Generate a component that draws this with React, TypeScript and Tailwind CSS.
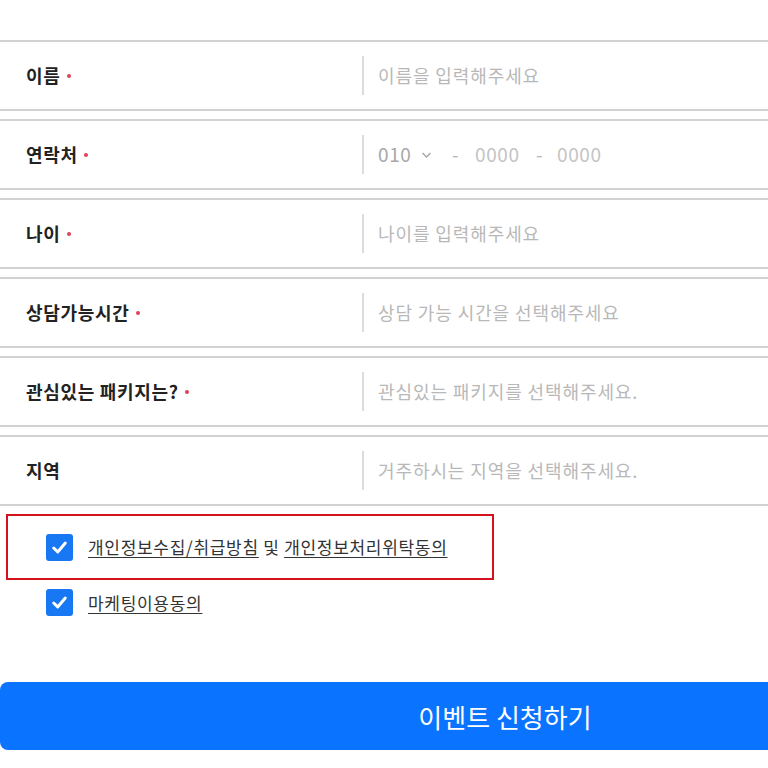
import React from "react";

const rows: { label: string; req: boolean; ph?: string; phone?: boolean }[] = [
  { label: "이름", req: true, ph: "이름을 입력해주세요" },
  { label: "연락처", req: true, phone: true },
  { label: "나이", req: true, ph: "나이를 입력해주세요" },
  { label: "상담가능시간", req: true, ph: "상담 가능 시간을 선택해주세요" },
  { label: "관심있는 패키지는?", req: true, ph: "관심있는 패키지를 선택해주세요." },
  { label: "지역", req: false, ph: "거주하시는 지역을 선택해주세요." },
];

function Check() {
  return (
    <span className="flex h-[27px] w-[27px] shrink-0 items-center justify-center rounded-[3px] bg-[#1877f2]">
      <svg width="19" height="19" viewBox="0 0 18 18" fill="none">
        <path d="M3.5 9.5 L7.3 13.2 L14.5 4.8" stroke="white" strokeWidth="2.8" strokeLinecap="round" strokeLinejoin="round" />
      </svg>
    </span>
  );
}

export default function App() {
  return (
    <div className="w-[768px] h-[768px] overflow-hidden bg-white" style={{ fontFamily: '"Noto Sans CJK KR", "Noto Sans", sans-serif' }}>
      <div className="pt-[40px]">
        {rows.map((r) => (
          <div key={r.label} className="mb-[8px] flex h-[71px] items-center border-y-2 border-[#d2d2d2]">
            <div className="flex w-[362px] items-center pl-[26px] text-[18px] font-bold tracking-[0.7px] text-[#222]">
              <span>{r.label}</span>
              {r.req && <span className="ml-[6px] h-[4px] w-[4px] rounded-full bg-[#e0405a]" />}
            </div>
            <div className="h-[39px] w-[2px] bg-[#dcdcdc]" />
            <div className="pl-[14px] text-[18px] tracking-[0.9px] text-[#b8b8b8]">
              {r.phone ? (
                <div className="flex items-center text-[19px] tracking-[0.6px]">
                  <span className="w-[43px] text-[#a8a8a8]">010</span>
                  <svg width="11" height="8" viewBox="0 0 11 8" fill="none">
                    <path d="M1.5 2 L5.5 6 L9.5 2" stroke="#a8a8a8" strokeWidth="1.5" />
                  </svg>
                  <span className="ml-[20px] w-[23px]">-</span>
                  <span className="w-[61px] text-[#c4c4c4]">0000</span>
                  <span className="w-[21px]">-</span>
                  <span className="text-[#c4c4c4]">0000</span>
                </div>
              ) : (
                r.ph
              )}
            </div>
          </div>
        ))}
      </div>
      <div className="ml-[6px] mt-[3px] flex h-[66px] w-[488px] items-center border-2 border-[#d4121e] pl-[38px]">
        <Check />
        <div className="ml-[15px] text-[17px] tracking-[0.7px] text-[#333]">
          <span className="underline underline-offset-[3px]">개인정보수집/취급방침</span>
          <span> 및 </span>
          <span className="underline underline-offset-[3px]">개인정보처리위탁동의</span>
        </div>
      </div>
      <div className="ml-[46px] mt-[9px] flex items-center">
        <Check />
        <span className="ml-[15px] text-[17px] tracking-[0.7px] text-[#333] underline underline-offset-[3px]">마케팅이용동의</span>
      </div>
      <div className="mt-[66px] flex h-[68px] w-[1010px] items-center justify-center rounded-[8px] bg-[#0a73ff] text-[26px] text-white">
        이벤트 신청하기
      </div>
    </div>
  );
}
